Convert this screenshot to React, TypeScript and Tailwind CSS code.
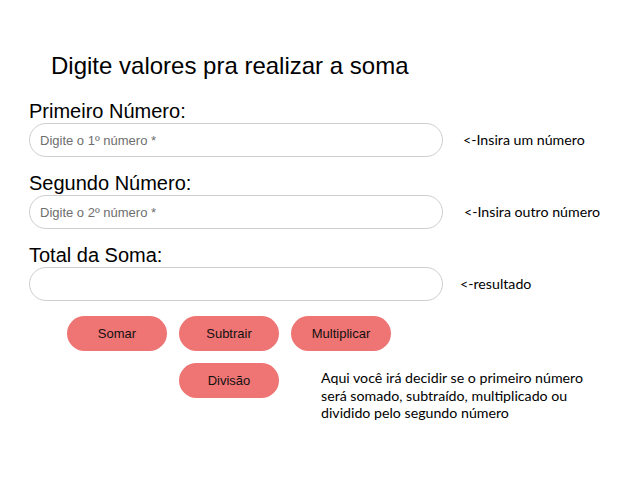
const arial = { fontFamily: '"Liberation Sans", Arial, sans-serif' };

function Field({ label, placeholder, note, noteGap, first }: { label: string; placeholder: string; note: string; noteGap: string; first?: boolean }) {
  return (
    <div className={first ? "mt-[19px]" : "mt-[14px]"}>
      <label className="block text-[20px] leading-[24px] text-black">{label}</label>
      <div className="flex items-center">
        <input
          placeholder={placeholder}
          className="h-[34px] w-[414px] rounded-full border border-[#cfcfcf] bg-white px-[10px] text-[13px] text-black outline-none placeholder:text-[#6e6e6e]"
        />
        <span className={`${noteGap} font-['Lato'] text-[14.2px] text-black`}>{note}</span>
      </div>
    </div>
  );
}

function OpButton({ children }: { children: string }) {
  return (
    <button className="h-[35px] w-[100px] rounded-full bg-[#ef7474] text-[13px] text-[#111]">
      {children}
    </button>
  );
}

export default function App() {
  return (
    <div className="min-h-[477px] w-[642px] bg-white pl-[29px] pt-[52px]" style={arial}>
      <h1 className="pl-[22px] text-[24px] leading-[28px] text-black">Digite valores pra realizar a soma</h1>

      <Field first label="Primeiro Número:" placeholder="Digite o 1º número *" note="<-Insira um número" noteGap="ml-[20px]" />
      <Field label="Segundo Número:" placeholder="Digite o 2º número *" note="<-Insira outro número" noteGap="ml-[21px]" />
      <Field label="Total da Soma:" placeholder="" note="<-resultado" noteGap="ml-[17px]" />

      <div className="mt-[15px] flex gap-[12px] pl-[38px]">
        <OpButton>Somar</OpButton>
        <OpButton>Subtrair</OpButton>
        <OpButton>Multiplicar</OpButton>
      </div>

      <div className="mt-[12px] flex items-start pl-[150px]">
        <OpButton>Divisão</OpButton>
        <p className="ml-[42px] mt-[6px] font-['Lato'] text-[14.2px] leading-[17.5px] text-black">
          Aqui você irá decidir se o primeiro número
          <br />
          será somado, subtraído, multiplicado ou
          <br />
          dividido pelo segundo número
        </p>
      </div>
    </div>
  );
}
